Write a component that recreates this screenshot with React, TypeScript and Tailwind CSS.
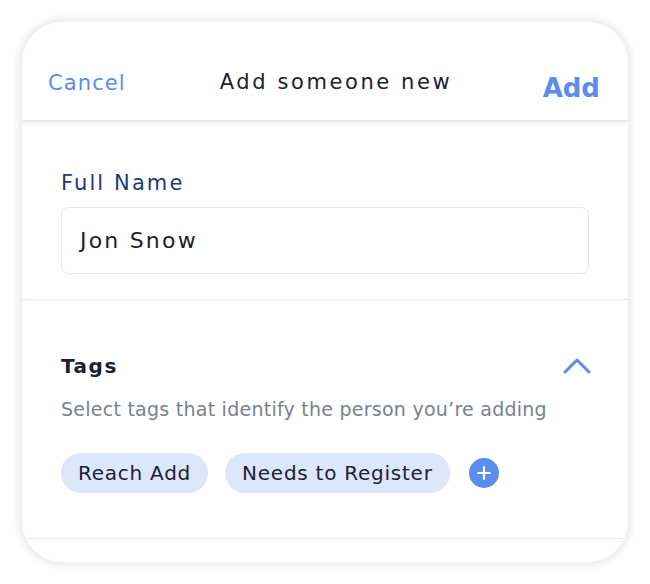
import { Plus } from "lucide-react";

const tags = ["Reach Add", "Needs to Register"];

export default function App() {
  return (
    <div className="w-[650px] h-[584px] bg-white pt-[22px] px-[22px] font-['DejaVu_Sans','Noto_Sans',sans-serif]">
      <div className="h-[540px] rounded-[40px] bg-white shadow-[0_0_6px_4px_rgba(0,0,0,0.07)] overflow-hidden flex flex-col">
        {/* header */}
        <div className="h-[99px] shrink-0 relative flex items-center justify-between px-[26px] border-b border-[#e4e8ef] shadow-[0_3px_4px_rgba(40,60,110,0.08)] z-10">
          <button className="text-[21px] text-[#5b8def] tracking-[1.1px] mt-[26px]">Cancel</button>
          <div className="absolute left-0 right-0 top-[50px] pl-[22px] text-center text-[21px] text-[#1d2134] tracking-[2.6px] leading-none pointer-events-none">
            Add someone new
          </div>
          <button className="text-[26px] font-semibold text-[#5b8def] mt-[34px] mr-[2px]">Add</button>
        </div>

        {/* full name */}
        <div className="px-[39px] pt-[52px] pb-[25px] border-b border-[#e6eaf2]">
          <div className="text-[21px] text-[#23387b] tracking-[2.1px] leading-none">Full Name</div>
          <div className="mt-[13px] h-[67px] rounded-[8px] border border-[#e3e8f2] flex items-center px-[18px] text-[22px] text-[#1d2134] tracking-[2.2px]">
            Jon Snow
          </div>
        </div>

        {/* tags */}
        <div className="px-[39px] pt-[50px] pb-[45px] border-b border-[#e6eaf2]">
          <div className="h-[32px] flex items-center justify-between">
            <div className="text-[20px] font-bold text-[#1b2133] tracking-[1.5px] leading-none">Tags</div>
            <svg width="30" height="18" viewBox="0 0 30 18" className="mr-[-3px]">
              <polyline
                points="3,15 15,3 27,15"
                fill="none"
                stroke="#5b8def"
                strokeWidth="3"
                strokeLinecap="round"
                strokeLinejoin="round"
              />
            </svg>
          </div>
          <div className="mt-[18px] text-[19px] text-[#7b8090] tracking-[0.25px] leading-none">
            Select tags that identify the person you’re adding
          </div>
          <div className="mt-[34px] flex items-center gap-[17px]">
            {tags.map((t) => (
              <span
                key={t}
                className="h-[40px] px-[17px] rounded-full bg-[#dde7fb] text-[20px] text-[#1d2134] tracking-[0.75px] flex items-center"
              >
                {t}
              </span>
            ))}
            <span className="ml-[2px] w-[30px] h-[30px] rounded-full bg-[#5b8def] flex items-center justify-center">
              <Plus size={20} strokeWidth={2.6} className="text-white" />
            </span>
          </div>
        </div>
      </div>
    </div>
  );
}
